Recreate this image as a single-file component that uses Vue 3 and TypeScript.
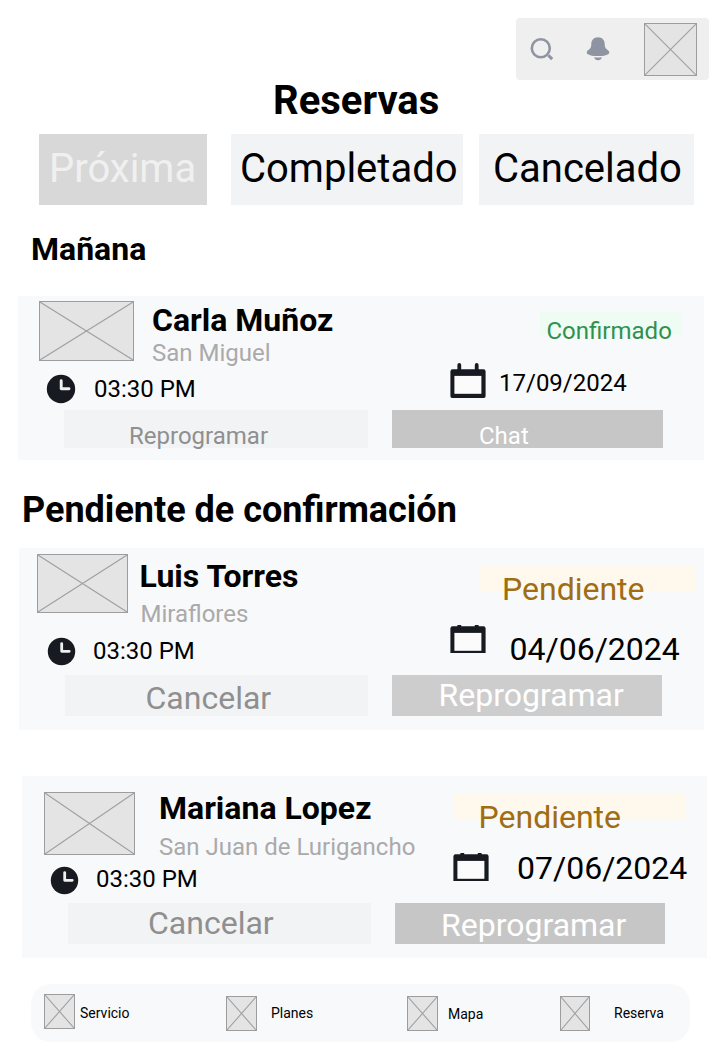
<script setup lang="ts">
interface Booking {
  id: string
  name: string
  district: string
  time: string
  date: string
  status: string
  secondary: string
  primary: string
  calendarBox: string
}

interface Group {
  id: string
  title: string
  bookings: Booking[]
}

const tabs: { id: string; label: string }[] = [
  { id: 'next', label: 'Próxima' },
  { id: 'done', label: 'Completado' },
  { id: 'cancelled', label: 'Cancelado' },
]

const groups: Group[] = [
  {
    id: 'tomorrow',
    title: 'Mañana',
    bookings: [
      {
        id: 'carla', name: 'Carla Muñoz', district: 'San Miguel', time: '03:30 PM',
        date: '17/09/2024', status: 'Confirmado', secondary: 'Reprogramar', primary: 'Chat',
        calendarBox: '0 0 36 36',
      },
    ],
  },
  {
    id: 'pending',
    title: 'Pendiente de confirmación',
    bookings: [
      {
        id: 'luis', name: 'Luis Torres', district: 'Miraflores', time: '03:30 PM',
        date: '04/06/2024', status: 'Pendiente', secondary: 'Cancelar', primary: 'Reprogramar',
        calendarBox: '0 5 36 28',
      },
      {
        id: 'mariana', name: 'Mariana Lopez', district: 'San Juan de Lurigancho', time: '03:30 PM',
        date: '07/06/2024', status: 'Pendiente', secondary: 'Cancelar', primary: 'Reprogramar',
        calendarBox: '0 5 36 28',
      },
    ],
  },
]

const links: { id: string; label: string }[] = [
  { id: 'service', label: 'Servicio' },
  { id: 'plans', label: 'Planes' },
  { id: 'map', label: 'Mapa' },
  { id: 'booking', label: 'Reserva' },
]
</script>

<template>
  <div class="screen">
    <header class="toolbar">
      <svg class="search" viewBox="0 0 26 26">
        <circle cx="11.2" cy="11.2" r="9" fill="none" stroke="#8f94a3" stroke-width="2.6" />
        <path d="M18.8 18.4 L22.6 22.1" stroke="#8f94a3" stroke-width="3" />
      </svg>
      <svg class="bell" viewBox="0 0 24 24">
        <path d="M12 0.3 C7.8 0.3 5.3 3.2 5.3 7 C5.3 10.3 4.4 11.6 2.3 12.9 C1 13.8 0.5 14.8 0.8 15.9 C1.3 17.9 6 19 12 19 C18 19 22.7 17.9 23.2 15.9 C23.5 14.8 23 13.8 21.7 12.9 C19.6 11.6 18.7 10.3 18.7 7 C18.7 3.2 16.2 0.3 12 0.3 Z" fill="#8f94a3" />
        <path d="M8 20.3 Q12 20.8 16 20.3 Q15 23.2 12 23.2 Q9 23.2 8 20.3 Z" fill="#8f94a3" />
      </svg>
      <svg class="cross avatar" viewBox="0 0 100 100" preserveAspectRatio="none">
        <path d="M0 0 L100 100 M100 0 L0 100" />
      </svg>
    </header>

    <h1>Reservas</h1>

    <nav class="tabs">
      <button v-for="tab in tabs" :key="tab.id" :class="['tab', tab.id]">{{ tab.label }}</button>
    </nav>

    <section v-for="group in groups" :key="group.id" :class="['group', group.id]">
      <h2>{{ group.title }}</h2>
      <article v-for="b in group.bookings" :key="b.id" :class="['card', b.id]">
        <div class="top">
          <svg class="cross photo" viewBox="0 0 100 100" preserveAspectRatio="none">
            <path d="M0 0 L100 100 M100 0 L0 100" />
          </svg>
          <div class="person">
            <h3>{{ b.name }}</h3>
            <p>{{ b.district }}</p>
          </div>
          <div class="badge"><span>{{ b.status }}</span></div>
        </div>
        <div class="meta">
          <div class="when">
            <svg class="clock" viewBox="0 0 30 30">
              <circle cx="15" cy="15" r="15" fill="#fdfdfd" />
              <circle cx="15" cy="15" r="14.2" fill="#171a21" />
              <path d="M15.2 6.8 V14.8 H23" fill="none" stroke="#f0f0f1" stroke-width="2.9" stroke-linecap="round" stroke-linejoin="round" />
            </svg>
            <span class="time">{{ b.time }}</span>
          </div>
          <svg class="calendar" :viewBox="b.calendarBox" preserveAspectRatio="none">
            <path d="M9.3 2 V9 M26.7 2 V9" stroke="#171a21" stroke-width="3.8" stroke-linecap="round" />
            <path d="M2.5 6.2 H33.5 Q35.6 6.2 35.6 8.5 V33 Q35.6 35 33.8 35 H2.2 Q0.4 35 0.4 33 V8.5 Q0.4 6.2 2.5 6.2 Z" fill="#171a21" />
            <rect x="4.4" y="12.9" width="27" height="17.9" fill="#fbfbfc" />
          </svg>
          <span class="date">{{ b.date }}</span>
        </div>
        <div class="actions">
          <button class="secondary">{{ b.secondary }}</button>
          <button class="primary">{{ b.primary }}</button>
        </div>
      </article>
    </section>

    <footer class="bottom">
      <a v-for="link in links" :key="link.id" :class="['link', link.id]">
        <svg class="cross" viewBox="0 0 100 100" preserveAspectRatio="none">
          <path d="M0 0 L100 100 M100 0 L0 100" />
        </svg>
        <span>{{ link.label }}</span>
      </a>
    </footer>
  </div>
</template>

<style>
body { margin: 0; background: #fff; }
</style>

<style scoped>
.screen {
  display: flex;
  flex-direction: column;
  box-sizing: border-box;
  width: 721px;
  height: 1063px;
  padding-top: 18px;
  overflow: hidden;
  background: #fff;
  color: #000;
  font-family: Roboto, "Liberation Sans", sans-serif;
}
h1, h2, h3, p { margin: 0; white-space: nowrap; }
svg { display: block; flex: none; }
button {
  display: block;
  flex: none;
  box-sizing: border-box;
  margin: 0;
  padding: 0;
  border: 0;
  font: inherit;
  text-align: left;
  white-space: nowrap;
}

.cross { box-sizing: border-box; border: 1px solid #9d9d9d; background: #e4e4e4; }
.cross path { fill: none; stroke: #a0a0a0; stroke-width: 1.1px; vector-effect: non-scaling-stroke; }

.toolbar {
  display: flex;
  box-sizing: border-box;
  width: 193px;
  height: 62px;
  margin-left: 516px;
  border-radius: 4px;
  background: #efefef;
}
.search { width: 26px; height: 26px; margin: 19px 0 0 13px; }
.bell { width: 24px; height: 24px; margin: 18.5px 0 0 31px; }
.search circle, .search path { transform: translateX(0.6px); }
.avatar { width: 53px; height: 53px; margin: 5px 0 0 34px; }

h1 { height: 48px; margin: -3px 0 0 273px; font-size: 40px; line-height: 48px; font-weight: 700; }

.tabs { display: flex; height: 71px; margin: 9px 0 0 39px; font-size: 40px; line-height: 48px; }
.tab { height: 71px; padding-bottom: 1px; background: #f2f3f5; color: #000; }
.tab.next { width: 168px; padding-left: 10px; background: #d8d8d8; color: #f0f0f0; }
.tab.done { width: 232px; margin-left: 24px; padding-left: 9px; }
.tab.cancelled { width: 215px; margin-left: 16px; padding-left: 14px; }

h2 { font-weight: 700; }
.tomorrow h2 { height: 40px; margin: 24px 0 27px 31px; font-size: 32px; line-height: 40px; }
.pending h2 { height: 44px; margin: 28px 0 16px 22px; font-size: 36px; line-height: 45px; }

.card { background: #f8f9fb; }
.top, .meta, .actions, .when { display: flex; align-items: flex-start; }
h3 { font-size: 32px; line-height: 40px; font-weight: 700; }
.person p, .time { font-size: 24px; line-height: 28px; white-space: nowrap; }
.person p { color: #aaa; }
.badge { flex: none; margin-left: auto; background: #fef8ed; color: #9f6d13; font-size: 32px; line-height: 40px; }
.badge span { display: block; }
.date { font-size: 32px; line-height: 40px; white-space: nowrap; }
.when { flex: none; width: 431px; }
.calendar { width: 36px; height: 28px; }
.actions { font-size: 32px; }
.secondary { background: #f2f3f5; color: #8f8f8f; }
.primary { background: #c6c6c6; color: #fff; }

.carla { width: 686px; height: 164px; margin-left: 18px; }
.carla .top { height: 65px; }
.carla .photo { width: 95px; height: 60px; margin: 5px 0 0 21px; }
.carla .person { margin: 4px 0 0 18px; }
.carla .person p { margin-top: -1px; }
.carla .badge { width: 142px; height: 23px; margin: 16px 22px 0 auto; padding-left: 6.5px; box-sizing: border-box; background: #eefcf3; color: #2f9150; font-size: 24px; line-height: 28px; }
.carla .badge span { padding-top: 5px; }
.carla .meta { height: 49.4px; }
.carla .when { width: 432px; }
.carla .clock { width: 30px; height: 30px; margin: 12.5px 0 0 28px; }
.carla .time { margin: 14px 0 0 18px; }
.carla .calendar { height: 36px; margin-top: 1.5px; }
.carla .date { margin: 8px 0 0 13px; font-size: 24px; line-height: 28px; }
.carla .actions { font-size: 24px; line-height: 28px; }
.carla button { height: 37.6px; }
.carla .secondary { width: 303.6px; margin-left: 46px; padding: 11.5px 0 0 65px; }
.carla .primary { width: 271px; margin-left: 24px; padding: 11.5px 0 0 87.4px; }

.luis { width: 685px; height: 182px; margin-left: 19px; }
.luis .top { height: 80px; }
.luis .photo { width: 91px; height: 59px; margin: 5.5px 0 0 17.5px; }
.luis .person { margin: 7.5px 0 0 12px; }
.luis .person p { margin: 4px 0 0 1px; }
.luis .badge { width: 216px; height: 26px; margin: 17.5px 9px 0 auto; }
.luis .badge span { padding: 3.5px 0 0 23px; }
.luis .meta { height: 46.6px; }
.luis .clock { width: 29px; height: 29px; margin: 9px 0 0 28px; }
.luis .time { margin: 9px 0 0 17px; }
.luis .calendar { margin-top: -3px; }
.luis .date { margin: 1px 0 0 23.5px; }
.luis button { height: 41.6px; }
.luis .secondary { width: 303px; margin-left: 46px; padding: 3px 0 0 80.5px; line-height: 40px; }
.luis .primary { width: 270px; margin-left: 24px; padding-left: 46.5px; padding-bottom: 1.5px; line-height: 40px; background: #cdcdcd; }

.mariana { width: 684.5px; height: 182px; margin: 46px 0 0 22px; }
.mariana .top { height: 80px; }
.mariana .photo { width: 91px; height: 63px; margin: 16px 0 0 21.5px; }
.mariana .person { margin: 12px 0 0 24.5px; }
.mariana .person p { margin-top: 5px; }
.mariana .badge { width: 232px; height: 26px; margin: 17.5px 20.5px 0 auto; }
.mariana .badge span { padding: 3.5px 0 0 24.5px; }
.mariana .meta { height: 46.6px; }
.mariana .clock { width: 29px; height: 29px; margin: 9.5px 0 0 28.4px; }
.mariana .time { margin: 8.6px 0 0 16.6px; }
.mariana .calendar { margin-top: -3px; }
.mariana .date { margin: -8px 0 0 28px; }
.mariana button { height: 41.6px; }
.mariana .secondary { width: 303px; margin-left: 46px; padding: 0 0 4px 80px; line-height: 40px; }
.mariana .primary { width: 270.4px; margin-left: 24px; padding: 2.5px 0 0 46px; line-height: 40px; }

.bottom {
  display: flex;
  flex: none;
  width: 659px;
  height: 58px;
  margin: 26px 0 0 31px;
  border-radius: 20px;
  background: #f8f9fb;
  font-size: 14px;
  line-height: 16px;
}
.link { display: flex; align-items: flex-start; flex: none; }
.link .cross { width: 31px; height: 35px; margin-top: 12px; }
.link span { margin-top: 21px; }
.service { width: 182px; padding-left: 13px; }
.service .cross { margin-top: 10px; }
.service span { margin-left: 5px; }
.plans { width: 181px; }
.plans span { margin-left: 14px; }
.map { width: 153px; }
.map span { margin: 22px 0 0 10px; }
.booking .cross { width: 30px; }
.booking span { margin-left: 24px; }
</style>
